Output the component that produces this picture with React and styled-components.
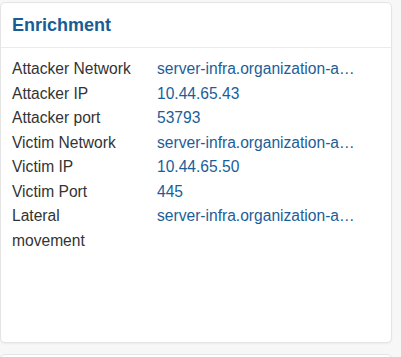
import React from "react";
import styled, { createGlobalStyle } from "styled-components";

const GlobalStyle = createGlobalStyle`
  html, body {
    margin: 0;
    padding: 0;
    background: #f7f7f7;
    font-family: "Liberation Sans", Arial, sans-serif;
  }
`;

const Page = styled.div`
  display: flex;
  flex-direction: column;
  gap: 11px;
  padding: 2px 9px 0 0;
  height: 357px;
  overflow: hidden;
  box-sizing: border-box;
`;

const Card = styled.section`
  background: #fff;
  border: 1px solid #e4e4e4;
  border-radius: 5px;
  box-shadow: 0 1px 2px rgba(0, 0, 0, 0.05);
  height: ${(props) => props.height}px;
  flex-shrink: 0;
  box-sizing: border-box;
  overflow: hidden;
`;

const CardHeader = styled.header`
  padding: 11px 11px;
  border-bottom: 1px solid #ebebeb;
`;

const Title = styled.h2`
  margin: 0;
  font-size: 18px;
  line-height: 22px;
  font-weight: 700;
  color: #185d96;
`;

const Details = styled.dl`
  display: grid;
  grid-template-columns: 145px 1fr;
  margin: 0;
  padding: 9px 11px 0 11px;
  font-size: 15.6px;
  line-height: 24.5px;
`;

const Label = styled.dt`
  color: #333;
  margin: 0;
  padding-right: 23px;
`;

const Value = styled.dd`
  color: #1b5e98;
  margin: 0;
  white-space: nowrap;
  overflow: hidden;
`;

const rows = [
  ["Attacker Network", "server-infra.organization-a…"],
  ["Attacker IP", "10.44.65.43"],
  ["Attacker port", "53793"],
  ["Victim Network", "server-infra.organization-a…"],
  ["Victim IP", "10.44.65.50"],
  ["Victim Port", "445"],
  ["Lateral movement", "server-infra.organization-a…"],
];

export default function App() {
  return (
    <>
      <GlobalStyle />
      <Page>
        <Card height={341}>
          <CardHeader>
            <Title>Enrichment</Title>
          </CardHeader>
          <Details>
            {rows.map(([label, value]) => (
              <React.Fragment key={label}>
                <Label>{label}</Label>
                <Value>{value}</Value>
              </React.Fragment>
            ))}
          </Details>
        </Card>
        <Card height={60} />
      </Page>
    </>
  );
}
